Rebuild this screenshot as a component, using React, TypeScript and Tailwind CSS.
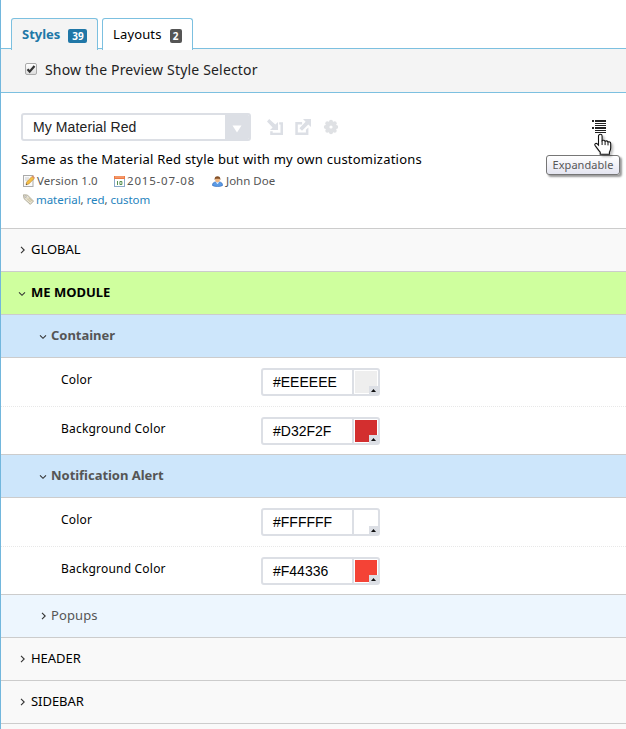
import React from "react";

function Chevron({ open }: { open?: boolean }) {
  return (
    <svg width="8" height="8" viewBox="0 0 8 8" fill="none" stroke="#333" strokeWidth="1.1" className="shrink-0">
      {open ? <path d="M1 3.3l3 3 3-3" /> : <path d="M3 .8L6.2 4 3 7.2" />}
    </svg>
  );
}

function Section({ label, open }: { label: string; open?: boolean }) {
  return (
    <div
      className={`flex h-[43px] items-center gap-1 border-b border-[#ccc] pl-[17px] text-[13px] text-black ${
        open ? "bg-[#cfff9e] font-bold" : "bg-[#f9f9f9] tracking-[-0.05px]"
      }`}
    >
      <Chevron open={open} />
      <span className="ml-px">{label}</span>
    </div>
  );
}

function SubSection({ label, open }: { label: string; open?: boolean }) {
  return (
    <div
      className={`flex h-[43px] items-center gap-1 border-b border-[#ccc] pl-[38px] text-[13px] text-[#555] ${
        open ? "bg-[#cde6fb] font-bold tracking-[-0.03px]" : "bg-[#edf6fe] tracking-[0.1px]"
      }`}
    >
      <Chevron open={open} />
      <span>{label}</span>
    </div>
  );
}

function ColorRow({ label, value, swatch, last }: { label: string; value: string; swatch: string; last?: boolean }) {
  return (
    <div
      className={`flex items-start bg-white pl-[60px] pt-[10px] ${
        last ? "h-[48px] border-b border-[#ccc]" : "h-[49px] border-b border-dotted border-[#e8e8e8]"
      }`}
    >
      <span className="w-[200px] pt-[2px] text-[12px] leading-5 tracking-[0.2px] text-black">{label}</span>
      <div className="flex h-7 w-[119px] rounded-[3px] border-2 border-[#dcdfe5] bg-white">
        <span className="w-[89px] pl-[10px] font-['Liberation_Sans',Arial,sans-serif] text-[14px] leading-6 text-black">
          {value}
        </span>
        <div className="relative flex-1 border-l-2 border-[#dcdfe5] p-px">
          <div className="h-[22px] w-[22px]" style={{ backgroundColor: swatch }} />
          <svg className="absolute bottom-0 right-0" width="9" height="8" viewBox="0 0 9 8">
            <path fill="#dcdfe5" d="M0 0h9v8H0z" />
            <path fill="#111" d="M2 6L4.5 3 7 6z" />
          </svg>
        </div>
      </div>
    </div>
  );
}

function Toolbar() {
  return (
    <div className="flex items-center">
      <div className="flex h-7 w-[230px] overflow-hidden rounded-[3px] border-2 border-[#dcdfe5] bg-white">
        <span className="flex-1 pl-[10px] font-['Liberation_Sans',Arial,sans-serif] text-[14px] leading-6 tracking-[0.1px] text-[#222]">
          My Material Red
        </span>
        <div className="flex w-6 items-center justify-center bg-[#dcdfe5]">
          <svg width="10" height="8" viewBox="0 0 10 8" className="mt-1">
            <path fill="#fff" d="M.5 .5h9L5 7.5z" />
          </svg>
        </div>
      </div>
      <svg width="16" height="16" viewBox="0 0 16 16" fill="#dcdfe5" className="ml-4">
        <path d="M2.2 0L8.3 5.6 11 3v8H3l2.6-2.6L0 2.5z" />
        <path d="M12.2 3.2H16V16H3.2v-3.7h2.5v1.4h7.8V5.6h-1.3z" />
      </svg>
      <svg width="16" height="16" viewBox="0 0 16 16" fill="#dcdfe5" className="ml-3">
        <path d="M8 0h8v8l-2.7-2.6L7 11.8 4.4 9.2l6.2-6.5z" />
        <path d="M.3 3h6.8v2.4H2.8v8.1h8.1v-2.7l2.5-2.4V16H.3z" />
      </svg>
      <svg width="16" height="16" viewBox="0 0 16 16" fill="#dfe1e4" className="ml-3">
        <circle cx="8" cy="8" r="5.7" />
        <circle cx="8" cy="2.8" r="2" /><circle cx="11.7" cy="4.3" r="2" />
        <circle cx="13.2" cy="8" r="2" /><circle cx="11.7" cy="11.7" r="2" />
        <circle cx="8" cy="13.2" r="2" /><circle cx="4.3" cy="11.7" r="2" />
        <circle cx="2.8" cy="8" r="2" /><circle cx="4.3" cy="4.3" r="2" />
        <circle cx="8" cy="8" r="1.6" fill="#fff" />
      </svg>
    </div>
  );
}

function NoteIcon() {
  return (
    <svg width="12" height="12" viewBox="0 0 12 12">
      <rect x=".5" y=".5" width="9.5" height="11" fill="#fafafa" stroke="#aaa" />
      <path d="M2 3h4M2 5h3" stroke="#ccc" />
      <path d="M3 9.8l.6-2.7L9 1.4 11.2 3.5 5.8 9z" fill="#f5bf45" stroke="#b78232" strokeWidth=".6" />
      <path d="M9 1.4l.8-.8 2 2-.6.9z" fill="#df8968" />
      <path d="M3 9.8l.4-1.3 1 .9z" fill="#333" />
    </svg>
  );
}

function CalendarIcon() {
  return (
    <svg width="11" height="11" viewBox="0 0 11 11">
      <rect x=".5" y=".5" width="10" height="10" fill="#fff" stroke="#8aa9c8" />
      <path d="M0 0h11v3H0z" fill="#ee7b45" />
      <path d="M1 1h9" stroke="#f8b38b" />
      <path d="M3.5 5v4M5.9 5.5h2v3h-2z" fill="none" stroke="#43853e" strokeWidth=".9" />
    </svg>
  );
}

function UserIcon() {
  return (
    <svg width="11" height="11" viewBox="0 0 11 11">
      <path d="M.4 9.4C.5 7 2 6 3.5 6h4C9 6 10.5 7 10.6 9.4c-1.5 1.5-8.7 1.5-10.2 0z" fill="#5b9be5" stroke="#2c63b5" strokeWidth=".6" />
      <path d="M3.6 6.2L5.5 8l1.9-1.8z" fill="#fff" />
      <circle cx="5.5" cy="3.9" r="2.4" fill="#eeb784" />
      <path d="M2.6 4C2.4 1.3 3.7.3 5.5.3S8.6 1.3 8.4 4L7.2 2.8H3.8z" fill="#845027" />
    </svg>
  );
}

function TagIcon() {
  return (
    <svg width="11" height="11" viewBox="0 0 11 11">
      <path d="M.5.8l4 .3 6 6-3.2 3.3L1 4.6z" fill="#e9e4d5" stroke="#aaa692" strokeWidth=".9" />
      <circle cx="2.6" cy="2.8" r=".8" fill="#fff" stroke="#888" strokeWidth=".5" />
      <path d="M4 4.5l3.5 3.5M5.5 3.8L9 7.3" stroke="#b4a674" strokeWidth=".7" />
    </svg>
  );
}

function ExpandControl() {
  return (
    <div className="relative mr-5 mt-[6px] h-[14px] w-[14px]">
      <svg width="15" height="14" viewBox="0 0 15 14" fill="#222" shapeRendering="crispEdges">
        <path d="M0 1h2v2H0zM3 1h11v2H3zM3 4h11v1H3zM3 6h11v1H3zM0 8h2v2H0zM3 8h11v2H3zM3 11h11v1H3zM3 13h11v1H3z" />
      </svg>
      <svg className="absolute left-px top-[14px] z-10 drop-shadow-[2px_2px_1px_rgba(0,0,0,0.25)]" width="20" height="24" viewBox="0 0 20 24">
        <path
          d="M7.3 1.3c1.1 0 1.8.7 1.8 1.8v4.5c1.2-.8 2.5-.3 3 .6 1.2-.6 2.4-.2 2.9.7 1.3-.5 2.7.2 2.7 1.7v4.5c0 2-.7 2.8-1.3 4v2.2H7.2v-2.2C5.3 17.3 4 15 2 12.3c-.8-1.4.9-2.7 2.3-1.4l1.2 1.3V3.1c0-1.1.7-1.8 1.8-1.8z"
          fill="#fff"
          stroke="#111"
          strokeWidth="1.1"
        />
        <path d="M9.1 7.5V12M12.1 8.2v3.9M15 8.9v3.5" stroke="#111" />
      </svg>
      <div className="absolute left-[-46px] top-[36px] flex h-5 w-[74px] items-center justify-center rounded-[3px] border border-[#767676] bg-gradient-to-b from-white to-[#e4e5f0] text-[11px] tracking-[0.05px] text-[#575757] shadow-[2px_2px_2px_rgba(0,0,0,0.4)]">
        Expandable
      </div>
    </div>
  );
}

export default function App() {
  return (
    <main className="h-[729px] w-[626px] overflow-hidden border-l border-[#72b7dd] bg-white font-['Noto_Sans','Open_Sans',sans-serif]">
      <div className="flex h-[49px] items-end gap-1 border-b border-[#7cc0e0] pl-[10px]">
        <div className="-mb-[2px] flex h-[32px] w-[87px] items-center gap-2 rounded-t-[3px] border border-b-0 border-[#7cc0e0] bg-[#f4f4f4] pl-[10px] text-[13px] font-bold text-[#2077a7]">
          <span>Styles</span>
          <span className="mt-[3px] flex h-[14px] w-[19px] items-center justify-center rounded-[2px] bg-[#2077a7] text-[10px] text-white">39</span>
        </div>
        <div className="-mb-[2px] flex h-[32px] w-[91px] items-center gap-2 rounded-t-[3px] border border-b-0 border-[#7cc0e0] bg-white pl-[10px] text-[13px] text-black">
          <span className="tracking-[0.14px]">Layouts</span>
          <span className="mt-[3px] flex h-[14px] w-[12px] items-center justify-center rounded-[2px] bg-[#555] text-[10px] font-bold text-white">2</span>
        </div>
      </div>

      <label className="flex h-[44px] items-center border-b border-[#7cc0e0] bg-[#f4f4f4] pl-6 text-[14px] text-[#222]">
        <span className="mb-1 mr-2 flex h-3 w-3 items-center justify-center rounded-[2px] border border-[#aaa] bg-gradient-to-b from-white to-[#ddd]">
          <svg width="10" height="10" viewBox="0 0 10 10">
            <path d="M1.5 5.2l2.2 2.4L8.5 2" fill="none" stroke="#333" strokeWidth="2.2" />
          </svg>
        </span>
        <span className="-mt-[2px] tracking-[0.18px]">Show the Preview Style Selector</span>
      </label>

      <section className="flex h-[136px] items-start justify-between border-b border-[#ccc] pl-5 pt-5">
        <div>
          <Toolbar />
          <p className="mt-2 text-[13px] leading-5 tracking-[0.225px] text-black">Same as the Material Red style but with my own customizations</p>
          <div className="mt-[2px] flex h-5 items-center pl-[2px] text-[11.5px] text-[#555]">
            <span className="flex w-[91px] items-center gap-[2px] tracking-[0.1px]"><NoteIcon />Version 1.0</span>
            <span className="flex w-[98px] items-center gap-[2px] tracking-[0.8px]"><CalendarIcon />2015-07-08</span>
            <span className="flex items-center gap-[3px]"><UserIcon />John Doe</span>
          </div>
          <div className="-mt-px flex h-[19px] items-center gap-[2px] pl-[2px] text-[11.5px] text-[#555]">
            <TagIcon />
            <span className="tracking-[-0.05px]"><span className="text-[#2583bd]">material</span>, <span className="text-[#2583bd]">red</span>, <span className="text-[#2583bd]">custom</span></span>
          </div>
        </div>
        <ExpandControl />
      </section>

      <Section label="GLOBAL" />
      <Section label="ME MODULE" open />
      <SubSection label="Container" open />
      <ColorRow label="Color" value="#EEEEEE" swatch="#eeeeee" />
      <ColorRow label="Background Color" value="#D32F2F" swatch="#d32f2f" last />
      <SubSection label="Notification Alert" open />
      <ColorRow label="Color" value="#FFFFFF" swatch="#ffffff" />
      <ColorRow label="Background Color" value="#F44336" swatch="#f44336" last />
      <SubSection label="Popups" />
      <Section label="HEADER" />
      <Section label="SIDEBAR" />
      <div className="h-[5px] bg-[#f9f9f9]" />
    </main>
  );
}
